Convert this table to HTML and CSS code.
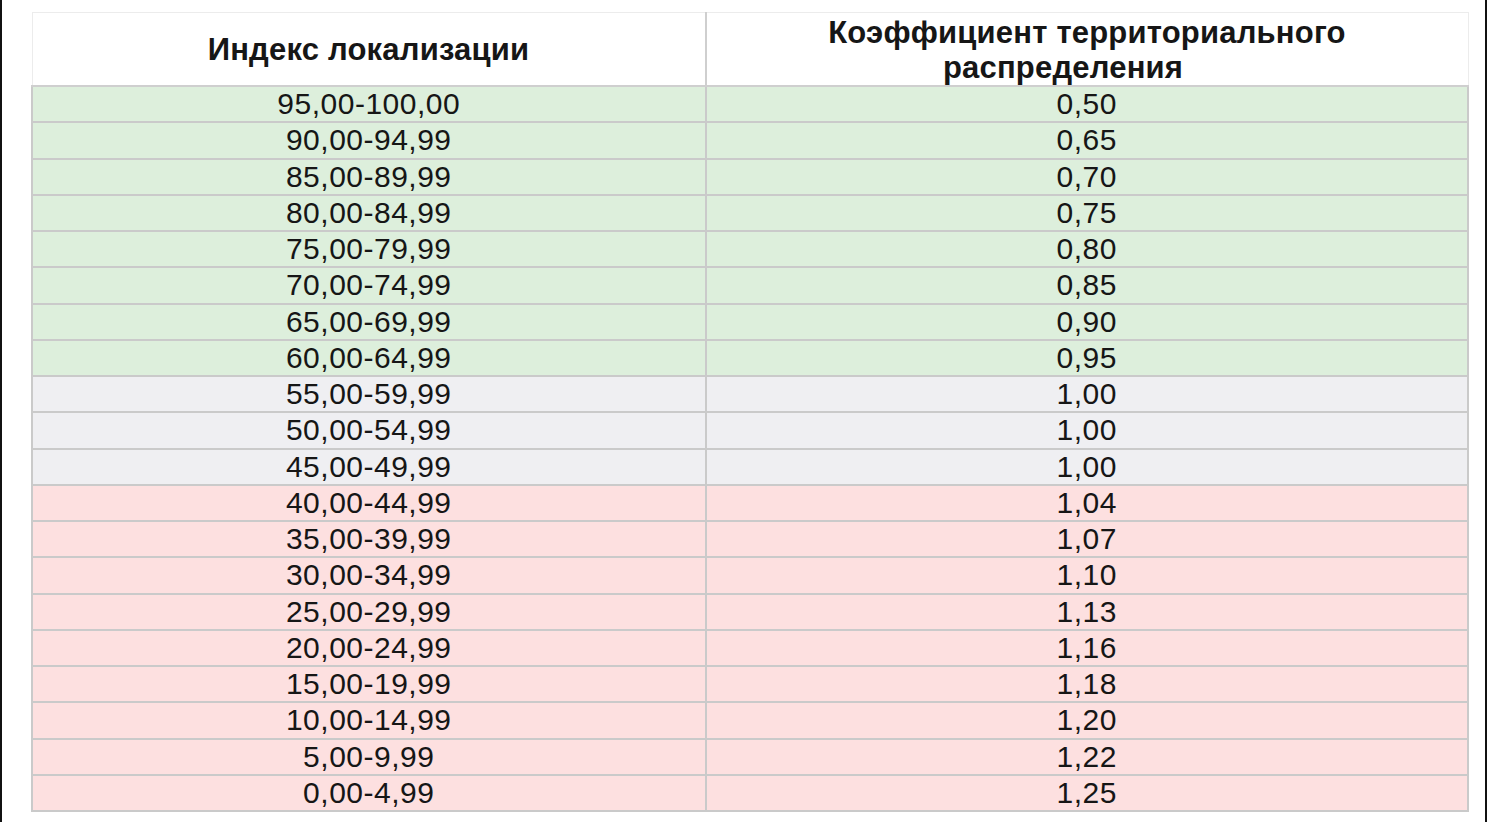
FILE: index.html
```html
<!DOCTYPE html>
<html lang="ru">
<head>
<meta charset="utf-8">
<title>Коэффициент территориального распределения</title>
<link rel="stylesheet" href="styles.css">
</head>
<body>
<div class="frame">
  <table class="coef">
    <thead>
      <tr>
        <th class="c1">Индекс локализации</th>
        <th class="c2">Коэффициент территориального<br><span class="l2">распределения</span></th>
      </tr>
    </thead>
    <tbody>
      <tr class="g"><td>95,00-100,00</td><td>0,50</td></tr>
      <tr class="g"><td>90,00-94,99</td><td>0,65</td></tr>
      <tr class="g"><td>85,00-89,99</td><td>0,70</td></tr>
      <tr class="g"><td>80,00-84,99</td><td>0,75</td></tr>
      <tr class="g"><td>75,00-79,99</td><td>0,80</td></tr>
      <tr class="g"><td>70,00-74,99</td><td>0,85</td></tr>
      <tr class="g"><td>65,00-69,99</td><td>0,90</td></tr>
      <tr class="g"><td>60,00-64,99</td><td>0,95</td></tr>
      <tr class="n"><td>55,00-59,99</td><td>1,00</td></tr>
      <tr class="n"><td>50,00-54,99</td><td>1,00</td></tr>
      <tr class="n"><td>45,00-49,99</td><td>1,00</td></tr>
      <tr class="r"><td>40,00-44,99</td><td>1,04</td></tr>
      <tr class="r"><td>35,00-39,99</td><td>1,07</td></tr>
      <tr class="r"><td>30,00-34,99</td><td>1,10</td></tr>
      <tr class="r"><td>25,00-29,99</td><td>1,13</td></tr>
      <tr class="r"><td>20,00-24,99</td><td>1,16</td></tr>
      <tr class="r"><td>15,00-19,99</td><td>1,18</td></tr>
      <tr class="r"><td>10,00-14,99</td><td>1,20</td></tr>
      <tr class="r"><td>5,00-9,99</td><td>1,22</td></tr>
      <tr class="r"><td>0,00-4,99</td><td>1,25</td></tr>
    </tbody>
  </table>
</div>
</body>
</html>
```

FILE: styles.css
```css
html, body {
  margin: 0;
  padding: 0;
  background: #ffffff;
}
.frame {
  box-sizing: border-box;
  width: 1487px;
  height: 822px;
  border-left: 2px solid #111;
  border-right: 2px solid #111;
  padding: 12px 0 0 29px;
  background: #ffffff;
}
.coef {
  border-collapse: collapse;
  table-layout: fixed;
  width: 1438px;
  font-family: "Liberation Sans", Arial, sans-serif;
  color: #161616;
}
.coef th {
  height: 71px;
  padding: 0;
  font-size: 31px;
  font-weight: bold;
  line-height: 35px;
  text-align: center;
  vertical-align: middle;
  background: #ffffff;
  border: 1px solid #ececec;
  border-bottom: 2px solid #cfcfcf;
  letter-spacing: 0.2px;
}
.coef th.c1 { width: 672px; border-right: 2px solid #cfcfcf; }
.coef th.c2 { padding-top: 1px; }
.coef th .l2 {
  display: inline-block;
  padding-right: 48px;
}
.coef td {
  height: 34.25px;
  padding: 0;
  font-size: 30px;
  line-height: 34px;
  text-align: center;
  border: 2px solid #cacaca;
  letter-spacing: 0.5px;
}
.coef tr.g td { background: #ddefdc; }
.coef tr.n td { background: #efeff2; }
.coef tr.r td { background: #fde0e0; }
```
